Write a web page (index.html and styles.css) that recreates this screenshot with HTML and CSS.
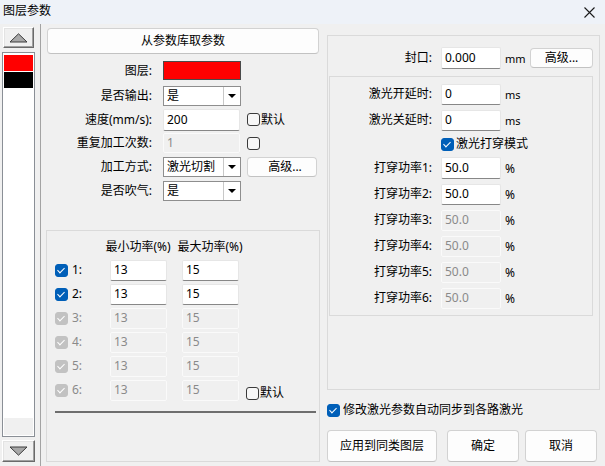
FILE: index.html
```html
<!DOCTYPE html>
<html lang="zh-CN">
<head>
<meta charset="utf-8">
<title>图层参数</title>
<link rel="stylesheet" href="styles.css">
</head>
<body>
<div class="window">
  <div class="titlebar">
    <span class="title">图层参数</span>
    <svg class="close" width="11" height="11" viewBox="0 0 11 11"><path d="M0.5 0.5 L10.5 10.5 M10.5 0.5 L0.5 10.5" stroke="#1a1a1a" stroke-width="1.1" fill="none"/></svg>
  </div>
  <div class="main">
    <div class="strip">
      <div class="arrow-btn up">
        <svg width="19" height="10" viewBox="0 0 19 10"><polygon points="1,9 9.5,0.8 18,9" fill="#a8a8a8" stroke="#3c3c3c" stroke-width="1"/></svg>
      </div>
      <div class="layer-list">
        <div class="layer red"></div>
        <div class="layer black"></div>
        <div class="list-foot"></div>
      </div>
      <div class="arrow-btn down">
        <svg width="19" height="10" viewBox="0 0 19 10"><polygon points="1,1 9.5,9.2 18,1" fill="#a8a8a8" stroke="#3c3c3c" stroke-width="1"/></svg>
      </div>
    </div>

    <div class="left-col">
      <button class="btn lib-btn">从参数库取参数</button>
      <div class="form-grid">
        <span class="lbl">图层:</span>
        <div class="swatch"></div>
        <span></span>

        <span class="lbl">是否输出:</span>
        <div class="combo"><span class="combo-val">是</span><span class="combo-arrow"></span></div>
        <span></span>

        <span class="lbl">速度(mm/s):</span>
        <div class="input tall">200</div>
        <span class="cb-label"><span class="cb"></span>默认</span>

        <span class="lbl">重复加工次数:</span>
        <div class="input disabled">1</div>
        <span class="cb-label"><span class="cb"></span></span>

        <span class="lbl">加工方式:</span>
        <div class="combo"><span class="combo-val">激光切割</span><span class="combo-arrow"></span></div>
        <button class="btn adv-btn">高级...</button>

        <span class="lbl">是否吹气:</span>
        <div class="combo"><span class="combo-val">是</span><span class="combo-arrow"></span></div>
        <span></span>
      </div>

      <div class="group power-group">
        <div class="pw-head"><span>最小功率(%)</span><span>最大功率(%)</span></div>
        <div class="pw-grid">
          <span class="cb checked"></span><span class="pw-idx">1:</span><div class="input pw">13</div><div class="input pw">15</div><span></span>
          <span class="cb checked"></span><span class="pw-idx">2:</span><div class="input pw">13</div><div class="input pw">15</div><span></span>
          <span class="cb checked dis"></span><span class="pw-idx dim">3:</span><div class="input pw disabled">13</div><div class="input pw disabled">15</div><span></span>
          <span class="cb checked dis"></span><span class="pw-idx dim">4:</span><div class="input pw disabled">13</div><div class="input pw disabled">15</div><span></span>
          <span class="cb checked dis"></span><span class="pw-idx dim">5:</span><div class="input pw disabled">13</div><div class="input pw disabled">15</div><span></span>
          <span class="cb checked dis"></span><span class="pw-idx dim">6:</span><div class="input pw disabled">13</div><div class="input pw disabled">15</div><span class="cb-label pw-default"><span class="cb"></span>默认</span>
        </div>
        <div class="sep"></div>
      </div>
    </div>

    <div class="right-col">
      <div class="group right-group">
        <div class="seal-row">
          <span class="lbl r-lbl">封口:</span>
          <div class="input r-in tall">0.000</div>
          <span class="unit small">mm</span>
          <button class="btn seal-adv">高级...</button>
        </div>
        <div class="inner-box">
          <div class="r-grid">
            <span class="lbl r-lbl">激光开延时:</span><div class="input r-in">0</div><span class="unit small">ms</span>
            <span class="lbl r-lbl">激光关延时:</span><div class="input r-in">0</div><span class="unit small">ms</span>
            <span></span><span class="cb-label pierce"><span class="cb checked"></span>激光打穿模式</span>
            <span class="lbl r-lbl">打穿功率1:</span><div class="input r-in tall">50.0</div><span class="unit">%</span>
            <span class="lbl r-lbl">打穿功率2:</span><div class="input r-in">50.0</div><span class="unit">%</span>
            <span class="lbl r-lbl">打穿功率3:</span><div class="input r-in disabled">50.0</div><span class="unit">%</span>
            <span class="lbl r-lbl">打穿功率4:</span><div class="input r-in disabled">50.0</div><span class="unit">%</span>
            <span class="lbl r-lbl">打穿功率5:</span><div class="input r-in disabled">50.0</div><span class="unit">%</span>
            <span class="lbl r-lbl">打穿功率6:</span><div class="input r-in disabled">50.0</div><span class="unit">%</span>
          </div>
        </div>
      </div>
      <div class="cb-label sync"><span class="cb checked"></span>修改激光参数自动同步到各路激光</div>
      <div class="btn-row">
        <button class="btn big apply">应用到同类图层</button>
        <button class="btn big ok">确定</button>
        <button class="btn big cancel">取消</button>
      </div>
    </div>
  </div>
</div>
</body>
</html>
```

FILE: styles.css
```css
* { box-sizing: border-box; }
html, body { margin: 0; padding: 0; }
body {
  width: 605px;
  height: 466px;
  overflow: hidden;
  background: #f0f0f0;
  font-family: "Noto Sans", "Noto Sans CJK SC", sans-serif;
  font-size: 12px;
  line-height: 16px;
  color: #000;
}
.window { width: 605px; height: 466px; display: flex; flex-direction: column; }

.titlebar {
  height: 24px;
  flex: none;
  background: #eef2f8;
  display: flex;
  align-items: center;
  justify-content: space-between;
  padding: 0 10px 2px 3px;
}
.title { font-size: 12px; }
.close { display: block; margin-top: 2px; }

.main { flex: 1; display: flex; min-height: 0; }

/* left strip */
.strip {
  width: 41px;
  flex: none;
  border-right: 1px solid #a3a3a3;
  display: flex;
  flex-direction: column;
  padding: 3px 0 0 2px;
}
.arrow-btn {
  display: flex;
  align-items: center;
  justify-content: center;
  background: #f0f0f0;
  border: 1px solid;
  border-color: #ffffff #6a6a6a #6a6a6a #ffffff;
  box-shadow: inset -1px -1px 0 #a0a0a0, inset 1px 1px 0 #e3e3e3;
}
.arrow-btn svg { display: block; }
.arrow-btn.up { width: 31px; height: 21px; margin-left: 1px; }
.arrow-btn.down { width: 33px; height: 22px; margin-top: 3px; }
.layer-list {
  width: 33px;
  height: 385px;
  margin-top: 4px;
  border: 1px solid #8a8f96;
  background: #fff;
  padding: 2px 1px 1px;
  display: flex;
  flex-direction: column;
  gap: 1px;
}
.layer { height: 16px; }
.layer.red { background: #ff0000; }
.layer.black { background: #000; }
.list-foot { margin-top: auto; height: 17px; background: #f0f0f0; }

/* left column */
.left-col {
  width: 274px;
  flex: none;
  margin-left: 5px;
  display: flex;
  flex-direction: column;
}
.btn {
  font: inherit;
  color: #000;
  background: #fdfdfd;
  border: 1px solid #d2d2d2;
  border-bottom-color: #c2c2c2;
  border-radius: 4px;
  padding: 0;
  line-height: 16px;
}
.lib-btn { height: 26px; margin: 4px 1px 0; }

.form-grid {
  margin-top: 4px;
  display: grid;
  grid-template-columns: 117px 78px auto;
  grid-template-rows: 25px 25px 23px 24px 24px 24px;
  align-items: center;
}
.lbl { text-align: right; white-space: nowrap; }
.form-grid .lbl { padding-right: 11px; }
.form-grid > :nth-child(3n) { padding-left: 6px; }

.swatch { height: 19px; background: #ff0000; border: 1px solid #4a4a4a; }

.combo {
  height: 20px;
  background: #fff;
  border: 1px solid #8e8e8e;
  display: flex;
}
.combo-val { flex: 1; padding-left: 3px; line-height: 18px; white-space: nowrap; }
.combo-arrow {
  width: 17px;
  border-left: 1px solid #c8c8c8;
  position: relative;
}
.combo-arrow::after {
  content: "";
  position: absolute;
  left: 4px;
  top: 7px;
  border-left: 4px solid transparent;
  border-right: 4px solid transparent;
  border-top: 4px solid #000;
}

.input {
  height: 20px;
  background: #fff;
  border: 1px solid #e6e6e6;
  border-bottom-color: #878787;
  border-radius: 2px;
  padding: 1px 3px 0;
  line-height: 16px;
  white-space: nowrap;
}
.input.tall { height: 22px; padding-top: 2px; }
.form-grid .input { width: 77px; }
.input.disabled {
  background: #f0f0f0;
  border: 1px solid #fafafa;
  color: #8a8a8a;
}

.cb-label { display: flex; align-items: center; gap: 1px; white-space: nowrap; }
.cb {
  display: inline-block;
  width: 13px;
  height: 13px;
  flex: none;
  border: 1px solid #3a3a3a;
  border-radius: 3px;
  background: #f7f7f7;
  position: relative;
}
.cb.checked { background: #005fb8; border-color: #005fb8; }
.cb.checked.dis { background: #c2c2c2; border-color: #c2c2c2; }
.cb.checked::after {
  content: "";
  position: absolute;
  left: 3px;
  top: 1px;
  width: 3px;
  height: 6px;
  border-right: 1px solid #fff;
  border-bottom: 1px solid #fff;
  transform: rotate(45deg);
}

.adv-btn { width: 70px; height: 20px; margin-left: 6px; }
.form-grid .adv-btn { justify-self: start; }

/* groups */
.group { border: 1px solid #dadada; }
.power-group {
  margin-top: 27px;
  height: 232px;
  padding: 8px 3px 0 8px;
}
.pw-head { display: flex; margin-left: 47px; white-space: nowrap; }
.pw-head span { width: 72px; text-align: center; }
.pw-grid {
  margin-top: 3px;
  display: grid;
  grid-template-columns: 17px 38px 72px 64px auto;
  grid-auto-rows: 24px;
  align-items: center;
}
.pw-idx.dim { color: #8a8a8a; }
.input.pw { width: 57px; height: 21px; }
.pw-default { align-self: end; margin-bottom: 1px; }
.sep { margin-top: 9px; height: 2px; background: #6e6e6e; }

/* right column */
.right-col {
  width: 273px;
  flex: none;
  margin-left: 7px;
  display: flex;
  flex-direction: column;
}
.right-group { margin-top: 11px; height: 355px; }
.seal-row {
  margin-top: 11px;
  height: 22px;
  display: flex;
  align-items: center;
}
.r-lbl { width: 113px; padding-right: 9px; flex: none; }
.input.r-in { width: 60px; flex: none; }
.unit { padding-left: 4px; margin-top: 2px; }
.unit.small { font-size: 11px; }
.seal-adv { width: 63px; height: 20px; margin-left: auto; margin-right: 6px; }

.inner-box {
  margin: 7px 6px 0 1px;
  height: 240px;
  border: 1px solid #dadada;
  padding-top: 4px;
}
.r-grid {
  display: grid;
  grid-template-columns: 111px 60px auto;
  grid-template-rows: 26px 26px 22px 26px 26px 26px 26px 26px 26px;
  align-items: center;
}
.r-grid .r-lbl { width: auto; }
.r-grid .input { height: 21px; }
.r-grid .input.tall { height: 22px; }
.pierce { grid-column: 2 / 4; gap: 2px; }

.sync { margin-top: 12px; height: 16px; gap: 3px; }
.btn-row { margin-top: 12px; display: flex; }
.btn.big { height: 32px; }
.apply { width: 110px; }
.ok { width: 72px; margin-left: 10px; }
.cancel { width: 72px; margin-left: 6px; }
```
